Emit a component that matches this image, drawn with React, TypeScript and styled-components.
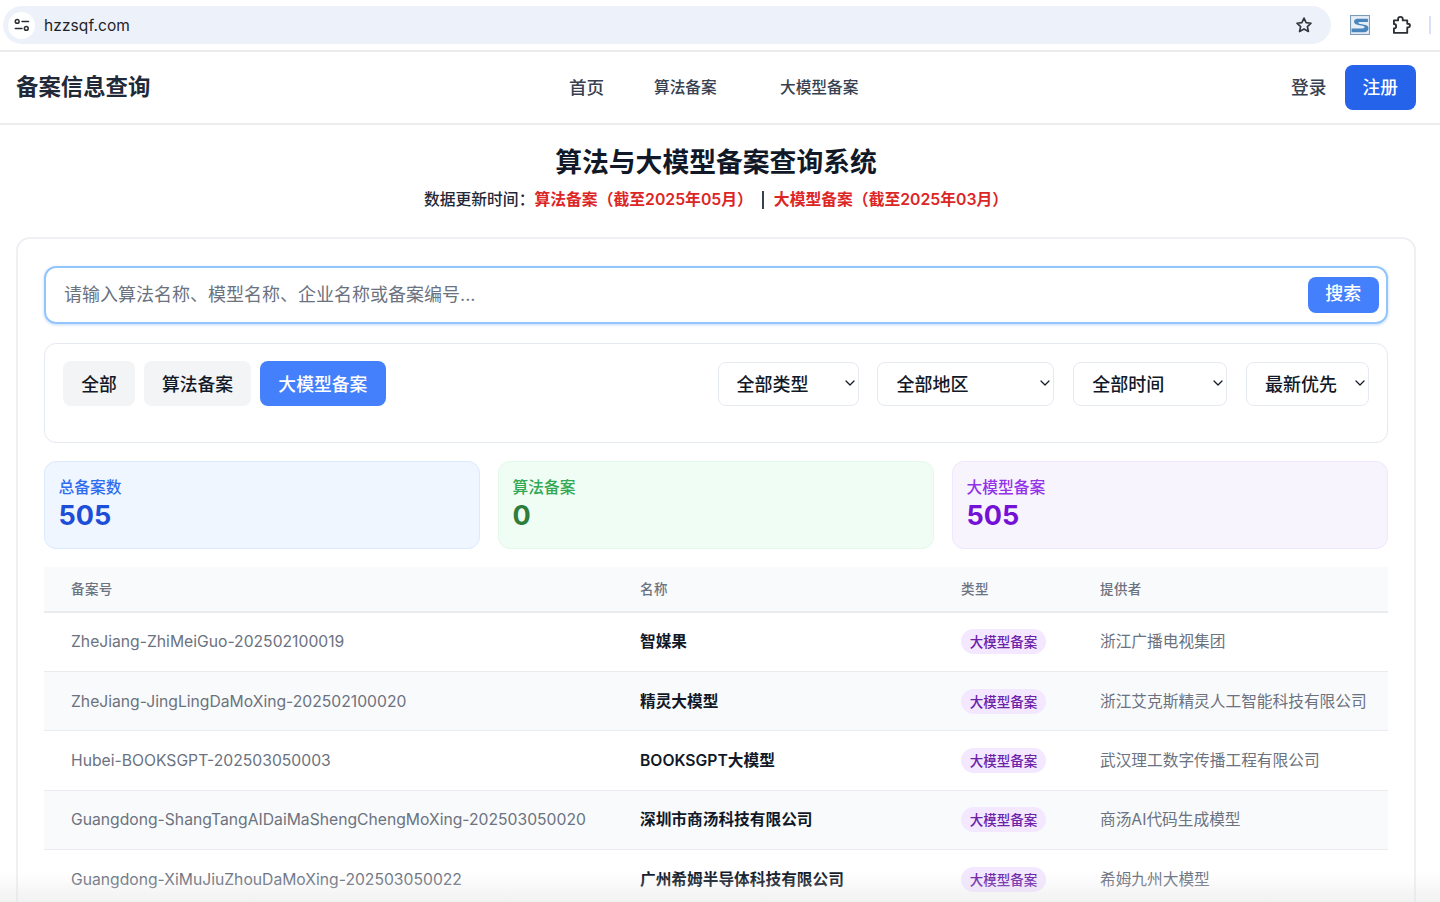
import React from "react";
import styled, { createGlobalStyle } from "styled-components";

const Global = createGlobalStyle`
  html, body { margin: 0; padding: 0; height: 100%; overflow: hidden; background: #fff; }
  body { font-family: Inter, "Noto Sans CJK SC", sans-serif; color: #111827; }
  * { box-sizing: border-box; }
`;
const Page = styled.div`height: 902px; overflow: hidden; position: relative;`;
const BrowserBar = styled.div`
  height: 52px; padding: 6px 0 0 3px; display: flex; align-items: flex-start; gap: 19px;
  border-bottom: 2px solid #ebebec; background: #fff;
`;
const Omni = styled.div`
  flex: 0 0 1328px; height: 38px; border-radius: 19px; background: #edf2fa; display: flex; align-items: center;
  padding: 0 18px 0 5px; font-size: 15.5px; color: #1f2328;
`;
const SiteIcon = styled.div`
  width: 27px; height: 27px; border-radius: 50%; background: #fff; display: flex; align-items: center; justify-content: center; margin-right: 9px;
`;
const Url = styled.span`flex: 1; letter-spacing: .1px;`;
const Tools = styled.div`display: flex; align-items: center; gap: 21px; height: 38px;`;
const Divider = styled.div`width: 2px; height: 18px; background: #d6e2f8; margin-left: -3px;`;
const Nav = styled.nav`
  height: 73px; border-bottom: 2px solid #ececee; display: flex; align-items: center; padding: 0 24px 0 16px;
`;
const Logo = styled.div`font-size: 22.4px; font-weight: 700; color: #1f2937; width: 553px; padding-bottom: 5px;`;
const Links = styled.div`display: flex; flex: 1; align-items: center; padding-bottom: 2px;`;
const NavLink = styled.a<{ $w: number; $big?: boolean }>`
  font-size: ${p => (p.$big ? 17.6 : 15.7)}px; font-weight: 500; color: #374151; width: ${p => p.$w}px; display: block;
`;
const Login = styled.a`font-size: 17.7px; font-weight: 500; color: #374151; margin-right: 18px; padding-bottom: 3px;`;
const Signup = styled.button`
  width: 71.5px; height: 45px; border: 0; border-radius: 8px; background: #2563eb; color: #fff; padding: 0 0 3px;
  font: 500 17.7px Inter, "Noto Sans CJK SC", sans-serif;
`;
const Head = styled.header`text-align: center; height: 112px; padding: 18px 8px 0 0;`;
const Title = styled.h1`margin: 0; font-size: 26.8px; line-height: 38px; font-weight: 700; color: #111827;`;
const Sub = styled.p`
  margin: 7px 0 0; display: flex; justify-content: center; align-items: center; font-size: 15.8px; line-height: 24px; font-weight: 500; color: #1f2937;
`;
const Red = styled.span`color: #dc2626; font-weight: 600;`;
const Sep = styled.span`width: 2px; height: 18px; background: #374151; margin: 0 10px 0 9px;`;
const Card = styled.main`
  margin: 0 24px 0 16px; border: 2px solid #eef0f4; border-radius: 14px; padding: 27px 26px; height: 800px;
`;
const Search = styled.div`
  height: 58px; border: 2px solid #93c5fd; border-radius: 12px; box-shadow: 0 1px 3px rgba(59,130,246,.3);
  display: flex; align-items: center; justify-content: space-between; padding: 0 7px 0 18px;
  font-size: 18px; color: #6b7280;
`;
const Placeholder = styled.span`padding-bottom: 4px;`;
const SearchBtn = styled.button`
  width: 71.5px; height: 36px; border: 0; border-radius: 8px; background: #4480fb; color: #fff; padding: 0 0 6px;
  font: 500 18px Inter, "Noto Sans CJK SC", sans-serif;
`;
const Filters = styled.section`
  margin-top: 19px; height: 100px; border: 1px solid #e5e9f2; border-radius: 12px; padding: 17px 18px; display: flex; align-items: flex-start; justify-content: space-between;
`;
const Tabs = styled.div`display: flex; gap: 8.7px;`;
const Tab = styled.button<{ $on?: boolean }>`
  height: 45px; padding: 0 18.25px 2px; border: 0; border-radius: 8px; font: 500 17.8px Inter, "Noto Sans CJK SC", sans-serif;
  background: ${p => (p.$on ? "#4480fb" : "#f3f4f6")}; color: ${p => (p.$on ? "#fff" : "#111827")};
`;
const Selects = styled.div`display: flex; gap: 18.8px; margin-top: 1px;`;
const Select = styled.div<{ $w: number }>`
  width: ${p => p.$w}px; height: 44px; border: 1px solid #e5e9f2; border-radius: 8px; background: #fff; display: flex; align-items: center;
  justify-content: space-between; padding: 0 2px 2px 18px; font-size: 18px; font-weight: 500; color: #111827;
`;
const Stats = styled.section`display: grid; grid-template-columns: repeat(3, 436px); gap: 18px; margin-top: 18px;`;
const Stat = styled.div<{ $bg: string; $border: string }>`
  height: 88px; border-radius: 12px; background: ${p => p.$bg}; border: 1px solid ${p => p.$border}; padding: 14px 13.5px 0;
`;
const StatLabel = styled.div<{ $c: string }>`font-size: 15.75px; line-height: 24px; font-weight: 500; color: ${p => p.$c};`;
const StatValue = styled.div<{ $c: string }>`font-size: 27px; line-height: 32px; font-weight: 700; color: ${p => p.$c};`;
const Table = styled.div`margin-top: 18px;`;
const Row = styled.div<{ $alt?: boolean }>`
  display: grid; grid-template-columns: 569px 321px 139px 315px; height: 59.4px; align-items: center;
  border-bottom: 1px solid #e9ebef; background: ${p => (p.$alt ? "#f9fafb" : "#fff")};
  & > * { padding-left: 27px; }
`;
const HeadRow = styled(Row)`height: 45.5px; background: #f9fafb; border-bottom: 2px solid #e9ebef;`;
const Th = styled.div`font-size: 13.5px; font-weight: 500; color: #6b7280; letter-spacing: .4px; padding-bottom: 2px;`;
const Code = styled.div`font-size: 15.7px; color: #6b7280; white-space: nowrap;`;
const Name = styled.div`font-size: 15.7px; font-weight: 600; color: #111827; white-space: nowrap; padding-bottom: 2px;`;
const BadgeCell = styled.div`display: flex;`;
const Badge = styled.span`
  height: 25px; width: 85px; border-radius: 13px; background: #f3e8ff; color: #6b21a8; font-size: 13.5px; font-weight: 500; padding-bottom: 1px;
  display: flex; align-items: center; justify-content: center;
`;
const Provider = styled.div`font-size: 15.7px; color: #6b7280; white-space: nowrap; padding-bottom: 2px;`;
const Fade = styled.div`
  position: absolute; left: 0; right: 0; bottom: 0; height: 30px; pointer-events: none;
  background: linear-gradient(to bottom, rgba(225,225,228,0), rgba(225,225,228,.45));
`;

const rows = [
  ["ZheJiang-ZhiMeiGuo-202502100019", "智媒果", "浙江广播电视集团"],
  ["ZheJiang-JingLingDaMoXing-202502100020", "精灵大模型", "浙江艾克斯精灵人工智能科技有限公司"],
  ["Hubei-BOOKSGPT-202503050003", "BOOKSGPT大模型", "武汉理工数字传播工程有限公司"],
  ["Guangdong-ShangTangAIDaiMaShengChengMoXing-202503050020", "深圳市商汤科技有限公司", "商汤AI代码生成模型"],
  ["Guangdong-XiMuJiuZhouDaMoXing-202503050022", "广州希姆半导体科技有限公司", "希姆九州大模型"],
];

const Chevron = () => (
  <svg width="12" height="12" viewBox="0 0 12 12" fill="none" stroke="#111827" strokeWidth="1.2" strokeLinecap="round" strokeLinejoin="round">
    <path d="M2 4l4 4 4-4" />
  </svg>
);

export default function App() {
  return (
    <Page>
      <Global />
      <BrowserBar>
        <Omni>
          <SiteIcon>
            <svg width="16" height="14" viewBox="0 0 16 14" fill="none" stroke="#2b2e33" strokeWidth="1.5" strokeLinecap="round">
              <circle cx="3.2" cy="3.4" r="1.9" />
              <path d="M8 3.4h6.5M1.3 10.4h6.7" />
              <circle cx="12.3" cy="10.4" r="1.9" />
            </svg>
          </SiteIcon>
          <Url>hzzsqf.com</Url>
          <svg width="18" height="18" viewBox="0 0 24 24" fill="none" stroke="#33363a" strokeWidth="2.2" strokeLinejoin="round">
            <path d="M12 2.8l2.8 6.1 6.6.7-4.9 4.500 1.400 6.600L12 17.400l-5.900 3.300 1.400-6.600-4.900-4.500 6.600-.7z" />
          </svg>
        </Omni>
        <Tools>
          <svg width="20" height="20" viewBox="0 0 19 19">
            <rect x=".5" y=".5" width="18" height="18" fill="#e6eef6" stroke="#7b9bb8" />
            <path d="M17 3.500H7.500C4 3.500 3 6 4.600 8c1.600 1.900 8 1.400 9 3 .6 1-.3 1.900-2 1.900H1.500v3.600h10.800c4 0 6-2.600 5-5.200-1-2.500-8-2.200-9.200-3.400-.6-.6 0-1.300 1.200-1.300H17z" fill="#4a86bd" />
          </svg>
          <svg width="20" height="20" viewBox="0 0 24 24" fill="none" stroke="#2b2e33" strokeWidth="2.200" strokeLinejoin="round">
            <path d="M3.500 6.500H8.500V5a2.800 2.800 0 0 1 5.600 0v1.500H19.500V10.500H20.500a2.200 2.200 0 0 1 0 4.400H19.500V21.500H3.500V16.200a2.700 2.700 0 0 0 0-5.400z" />
          </svg>
          <Divider />
        </Tools>
      </BrowserBar>
      <Nav>
        <Logo>备案信息查询</Logo>
        <Links>
          <NavLink $w={85} $big>首页</NavLink>
          <NavLink $w={126}>算法备案</NavLink>
          <NavLink $w={100}>大模型备案</NavLink>
        </Links>
        <Login>登录</Login>
        <Signup>注册</Signup>
      </Nav>
      <Head>
        <Title>算法与大模型备案查询系统</Title>
        <Sub>
          数据更新时间：<Red>算法备案（截至2025年05月）</Red>
          <Sep />
          <Red>大模型备案（截至2025年03月）</Red>
        </Sub>
      </Head>
      <Card>
        <Search>
          <Placeholder>请输入算法名称、模型名称、企业名称或备案编号...</Placeholder>
          <SearchBtn>搜索</SearchBtn>
        </Search>
        <Filters>
          <Tabs>
            <Tab>全部</Tab>
            <Tab>算法备案</Tab>
            <Tab $on>大模型备案</Tab>
          </Tabs>
          <Selects>
            <Select $w={141}>全部类型<Chevron /></Select>
            <Select $w={177}>全部地区<Chevron /></Select>
            <Select $w={154}>全部时间<Chevron /></Select>
            <Select $w={123}>最新优先<Chevron /></Select>
          </Selects>
        </Filters>
        <Stats>
          <Stat $bg="#eff6ff" $border="#dbeafe">
            <StatLabel $c="#2f6df0">总备案数</StatLabel>
            <StatValue $c="#1d4ed8">505</StatValue>
          </Stat>
          <Stat $bg="#f0fdf4" $border="#e3f9ea">
            <StatLabel $c="#34a853">算法备案</StatLabel>
            <StatValue $c="#2e7d3a">0</StatValue>
          </Stat>
          <Stat $bg="#f8f4fe" $border="#efe7fd">
            <StatLabel $c="#9333ea">大模型备案</StatLabel>
            <StatValue $c="#7411d6">505</StatValue>
          </Stat>
        </Stats>
        <Table>
          <HeadRow>
            <Th>备案号</Th>
            <Th>名称</Th>
            <Th>类型</Th>
            <Th>提供者</Th>
          </HeadRow>
          {rows.map((r, i) => (
            <Row key={r[0]} $alt={i % 2 === 1}>
              <Code>{r[0]}</Code>
              <Name>{r[1]}</Name>
              <BadgeCell><Badge>大模型备案</Badge></BadgeCell>
              <Provider>{r[2]}</Provider>
            </Row>
          ))}
        </Table>
      </Card>
      <Fade />
    </Page>
  );
}
